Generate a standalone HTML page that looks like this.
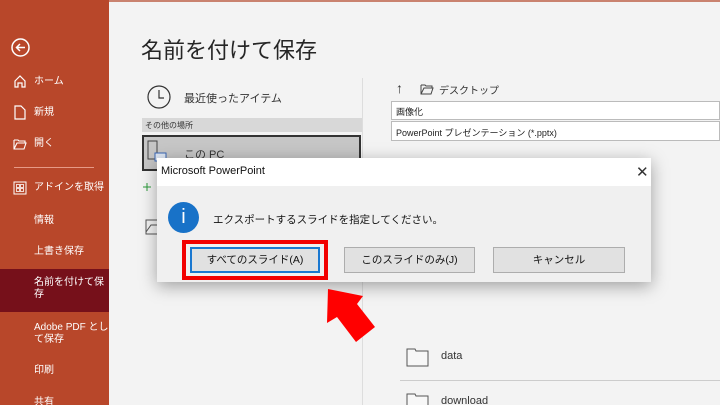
<!DOCTYPE html>
<html><head><meta charset="utf-8"><style>
*{margin:0;padding:0;box-sizing:border-box}
html{width:720px;height:405px;overflow:hidden}
body{width:720px;height:405px;overflow:hidden;background:#f3f3f3;font-family:"Liberation Sans","Noto Sans CJK JP",sans-serif;position:relative;color:#222}
.abs{position:absolute}
.side{left:0;top:0;width:109px;height:405px;background:#b8472a;color:#fff}
.si{position:absolute;left:34px;font-size:10px;color:#fff;line-height:12px}
.sel{position:absolute;left:0;top:269px;width:109px;height:43px;background:#76101a}
</style></head><body>
<div class="abs side">
 <svg class="abs" style="left:10px;top:37px" width="21" height="21"><circle cx="10.5" cy="10.5" r="8.5" fill="none" stroke="#fff" stroke-width="1.5"/><path d="M15 10.5H6.5M10 7l-3.5 3.5L10 14" fill="none" stroke="#fff" stroke-width="1.5"/></svg>
 <svg class="abs" style="left:13px;top:74px" width="14" height="14"><path d="M2 7L7 2l5 5v6H9V9H5v4H2z" fill="none" stroke="#fff" stroke-width="1.2"/></svg>
 <div class="si" style="top:76px">ホーム</div>
 <svg class="abs" style="left:14px;top:105px" width="12" height="15"><path d="M1 1h6l4 4v9H1z" fill="none" stroke="#fff" stroke-width="1.2"/></svg>
 <div class="si" style="top:107px">新規</div>
 <svg class="abs" style="left:13px;top:138px" width="15" height="12"><path d="M1 2h4l1 1h6v2M1 2v9h10l2-6H4l-3 6" fill="none" stroke="#fff" stroke-width="1.1"/></svg>
 <div class="si" style="top:138px">開く</div>
 <div class="abs" style="left:14px;top:167px;width:80px;height:1px;background:#e79a86"></div>
 <svg class="abs" style="left:13px;top:181px" width="14" height="14"><rect x="1" y="1" width="12" height="12" fill="none" stroke="#fff"/><rect x="3.5" y="3.5" width="3" height="3" fill="none" stroke="#fff" stroke-width=".8"/><rect x="7.5" y="3.5" width="3" height="3" fill="none" stroke="#fff" stroke-width=".8"/><rect x="3.5" y="7.5" width="3" height="3" fill="none" stroke="#fff" stroke-width=".8"/><rect x="7.5" y="7.5" width="3" height="3" fill="none" stroke="#fff" stroke-width=".8"/></svg>
 <div class="si" style="top:182px">アドインを取得</div>
 <div class="si" style="top:215px">情報</div>
 <div class="si" style="top:246px">上書き保存</div>
 <div class="sel"></div>
 <div class="si" style="top:277px">名前を付けて保<br>存</div>
 <div class="si" style="top:322px">Adobe PDF とし<br>て保存</div>
 <div class="si" style="top:365px">印刷</div>
 <div class="si" style="top:397px">共有</div>
</div>
<div class="abs" style="left:109px;top:0;width:611px;height:2px;background:#c9826f"></div>
<div class="abs" style="left:141px;top:33px;font-size:22px;color:#262626">名前を付けて保存</div>
<div class="abs" style="left:362px;top:78px;width:1px;height:327px;background:#ddd"></div>
<svg class="abs" style="left:146px;top:84px" width="26" height="26"><circle cx="13" cy="13" r="11" fill="none" stroke="#333" stroke-width="1.2"/><path d="M13 6v8h5" fill="none" stroke="#333" stroke-width="1.2"/></svg>
<div class="abs" style="left:184px;top:90px;font-size:11px;color:#333">最近使ったアイテム</div>
<div class="abs" style="left:142px;top:118px;width:220px;height:14px;background:#d8d8d8;font-size:8px;padding:2px 3px;color:#333">その他の場所</div>
<div class="abs" style="left:142px;top:135px;width:219px;height:36px;background:#c6c6c6;border:2px solid #333"></div>
<svg class="abs" style="left:146px;top:139px" width="24" height="24"><rect x="2" y="2" width="9" height="18" fill="none" stroke="#444"/><rect x="9" y="14" width="11" height="8" fill="#dde6f3" stroke="#3a67b4"/></svg>
<div class="abs" style="left:184px;top:146px;font-size:11px;color:#333">この PC</div>
<svg class="abs" style="left:143px;top:182px" width="14" height="26"><path d="M4 1v8M0 5h8" stroke="#2a9a3a"/></svg>
<svg class="abs" style="left:145px;top:218px" width="14" height="20"><path d="M1 2h12v14H1zM1 14l5-7 7 0" fill="none" stroke="#555"/></svg>
<div class="abs" style="left:396px;top:80px;font-size:14px;color:#333">↑</div>
<svg class="abs" style="left:420px;top:83px" width="15" height="12"><path d="M1 2h4l1 1h6v2M1 2v9h10l2-6H4l-3 6" fill="none" stroke="#444" stroke-width="1"/></svg>
<div class="abs" style="left:439px;top:82px;font-size:10px;color:#333">デスクトップ</div>
<div class="abs" style="left:391px;top:101px;width:329px;height:19px;background:#fff;border:1px solid #bbb;font-size:9px;padding:3px 4px">画像化</div>
<div class="abs" style="left:391px;top:121px;width:329px;height:20px;background:#fff;border:1px solid #bbb;font-size:9px;padding:4px 4px">PowerPoint プレゼンテーション (*.pptx)</div>
<svg class="abs" style="left:406px;top:346px" width="24" height="22"><path d="M1 3h8l1 2h12v15H1z" fill="#f7f7f7" stroke="#555"/></svg>
<div class="abs" style="left:441px;top:350px;font-size:11px;color:#333">data</div>
<div class="abs" style="left:400px;top:380px;width:320px;height:1px;background:#ccc"></div>
<svg class="abs" style="left:406px;top:391px" width="24" height="14"><path d="M1 3h8l1 2h12v15H1z" fill="#f7f7f7" stroke="#555"/></svg>
<div class="abs" style="left:441px;top:395px;font-size:11px;color:#333">download</div>
<div class="abs" style="left:157px;top:158px;width:494px;height:124px;background:#f0f0f0;box-shadow:0 4px 16px rgba(0,0,0,.35)">
 <div class="abs" style="left:0;top:0;width:494px;height:28px;background:#fff;font-size:11px;padding:7px 4px;color:#111">Microsoft PowerPoint</div>
 <div class="abs" style="left:479px;top:5px;font-size:15px;color:#333">✕</div>
 <div class="abs" style="left:11px;top:44px;width:31px;height:31px;border-radius:50%;background:#1872c8;color:#fff;font-size:20px;text-align:center;line-height:31px">i</div>
 <div class="abs" style="left:56px;top:54px;font-size:10.5px;color:#111">エクスポートするスライドを指定してください。</div>
 <div class="abs" style="left:33px;top:89px;width:130px;height:26px;background:#e1e1e1;border:2px solid #1a78d0;font-size:10.5px;text-align:center;line-height:22px;color:#111">すべてのスライド(A)</div>
 <div class="abs" style="left:187px;top:89px;width:131px;height:26px;background:#e1e1e1;border:1px solid #adadad;font-size:10.5px;text-align:center;line-height:24px;color:#111">このスライドのみ(J)</div>
 <div class="abs" style="left:336px;top:89px;width:132px;height:26px;background:#e1e1e1;border:1px solid #adadad;font-size:10.5px;text-align:center;line-height:24px;color:#111">キャンセル</div>
</div>
<div class="abs" style="left:182px;top:240px;width:146px;height:40px;border:4px solid #f20000"></div>
<svg class="abs" style="left:320px;top:280px" width="70" height="70"><polygon points="8,9 43,16 37,24 55,47 36,62 17,37 7,43" fill="#f00"/></svg>
</body></html>
